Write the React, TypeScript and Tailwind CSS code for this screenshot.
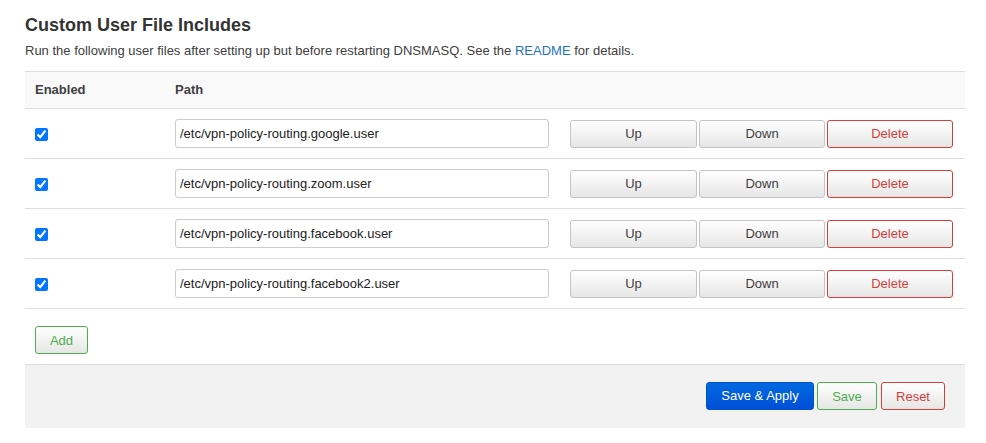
import React, { useState } from 'react';

const initialRows = [
    '/etc/vpn-policy-routing.google.user',
    '/etc/vpn-policy-routing.zoom.user',
    '/etc/vpn-policy-routing.facebook.user',
    '/etc/vpn-policy-routing.facebook2.user',
];

const btn = 'h-[28px] rounded-[3px] border bg-gradient-to-b from-white to-[#e6e6e6] text-[13px] leading-none';

const App: React.FC = () => {
    const [rows, setRows] = useState(initialRows.map(path => ({ path, enabled: true })));

    return (
        <div className="min-h-[443px] bg-white pl-[25px] pr-[21px] pt-[14px] font-['Liberation_Sans',Arial,sans-serif] text-[#404040]">
            <h2 className="text-[18px] font-bold leading-[22px] text-[#333]">Custom User File Includes</h2>
            <p className="mt-[6px] text-[13px] leading-[18px] text-[#404040]">
                Run the following user files after setting up but before restarting DNSMASQ. See the{' '}
                <a href="#" className="text-[#1e73be]">README</a> for details.
            </p>

            <div className="mt-[11px] border-t border-[#ddd]">
                {/* header */}
                <div className="flex h-[37px] items-center bg-[#f9f9f9] border-b border-[#ddd] text-[13px] font-bold text-[#404040]">
                    <div className="w-[150px] pl-[10px]">Enabled</div>
                    <div>Path</div>
                </div>

                {rows.map((row, i) => (
                    <div key={i} className="flex h-[50px] items-center border-b border-[#ddd]">
                        <div className="w-[150px] pl-[10px] pt-[4px]">
                            <input
                                type="checkbox"
                                checked={row.enabled}
                                onChange={() => setRows(r => r.map((x, j) => j === i ? { ...x, enabled: !x.enabled } : x))}
                                className="h-[13px] w-[13px] accent-[#0075ff]"
                            />
                        </div>
                        <input
                            value={row.path}
                            onChange={e => setRows(r => r.map((x, j) => j === i ? { ...x, path: e.target.value } : x))}
                            className="h-[29px] w-[374px] rounded-[3px] border border-[#ccc] px-[4px] text-[13px] text-[#222] outline-none"
                        />
                        <div className="ml-[21px] flex gap-[2px]">
                            <button className={`${btn} w-[127px] border-[#c4c4c4] text-[#404040]`}>Up</button>
                            <button className={`${btn} w-[126px] border-[#c4c4c4] text-[#404040]`}>Down</button>
                            <button className={`${btn} w-[126px] border-[#d43f3a] text-[#d43f3a]`}>Delete</button>
                        </div>
                    </div>
                ))}

                <div className="h-[56px] pl-[10px] pt-[17px] border-b border-[#ddd]">
                    <button
                        onClick={() => setRows(r => [...r, { path: '', enabled: true }])}
                        className={`${btn} w-[53px] border-[#4cae4c] text-[#4cae4c]`}
                    >
                        Add
                    </button>
                </div>

                <div className="flex h-[63px] items-start justify-end rounded-b-[3px] bg-[#f2f2f2] pr-[20px] pt-[17px]">
                    <button className="h-[28px] w-[108px] rounded-[3px] border border-[#0052cc] bg-gradient-to-b from-[#0069e0] to-[#004fd6] text-[13px] text-white">Save &amp; Apply</button>
                    <button className={`${btn} ml-[3px] w-[60px] border-[#4cae4c] text-[#4cae4c]`}>Save</button>
                    <button className={`${btn} ml-[4px] w-[64px] border-[#d43f3a] text-[#d43f3a]`}>Reset</button>
                </div>
            </div>
        </div>
    );
};

export default App;
